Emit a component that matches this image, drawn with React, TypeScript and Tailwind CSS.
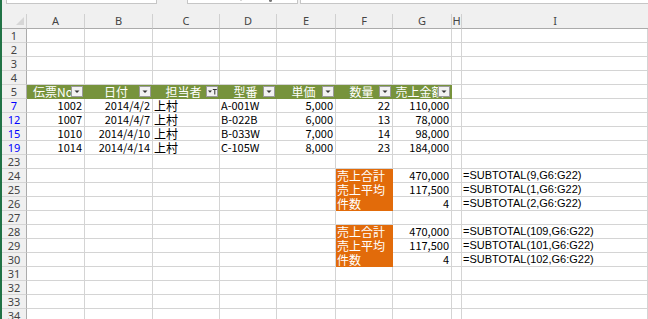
import React from "react";

type Cell = {
  t: string;
  a?: "l" | "r" | "c";
  f?: "num" | "jp" | "fx" | "head";
  bg?: "green" | "orange";
  btn?: "sort" | "filter";
} | null;

type Row = { n: number; blue?: boolean; cells: Cell[] };

const widths = ["w-[58px]", "w-[68px]", "w-[67px]", "w-[57px]", "w-[59px]", "w-[57px]", "w-[59px]", "w-[10px]", "flex-1"];
const letters = ["A", "B", "C", "D", "E", "F", "G", "H", "I"];

const empty = (n: number): Row => ({ n, cells: Array(9).fill(null) });

const head: Cell[] = [
  ...["伝票No", "日付", "担当者", "型番", "単価", "数量", "売上金額"].map(
    (t, i): Cell => ({ t, a: "c", f: "head", bg: "green", btn: i === 2 ? "filter" : "sort" }),
  ),
  null,
  null,
];

const data = (n: number, v: string[]): Row => ({
  n,
  blue: true,
  cells: [
    { t: v[0], a: "r", f: "num" },
    { t: v[1], a: "r", f: "num" },
    { t: v[2], a: "l", f: "jp" },
    { t: v[3], a: "l", f: "num" },
    { t: v[4], a: "r", f: "num" },
    { t: v[5], a: "r", f: "num" },
    { t: v[6], a: "r", f: "num" },
    null,
    null,
  ],
});

const sum = (n: number, label: string, value: string, formula: string): Row => ({
  n,
  cells: [
    null, null, null, null, null,
    { t: label, a: "l", f: "jp", bg: "orange" },
    { t: value, a: "r", f: "num" },
    null,
    { t: formula, a: "l", f: "fx" },
  ],
});

const rows: Row[] = [
  empty(1),
  empty(2),
  empty(3),
  empty(4),
  { n: 5, cells: head },
  data(7, ["1002", "2014/4/2", "上村", "A-001W", "5,000", "22", "110,000"]),
  data(12, ["1007", "2014/4/7", "上村", "B-022B", "6,000", "13", "78,000"]),
  data(15, ["1010", "2014/4/10", "上村", "B-033W", "7,000", "14", "98,000"]),
  data(19, ["1014", "2014/4/14", "上村", "C-105W", "8,000", "23", "184,000"]),
  empty(23),
  sum(24, "売上合計", "470,000", "=SUBTOTAL(9,G6:G22)"),
  sum(25, "売上平均", "117,500", "=SUBTOTAL(1,G6:G22)"),
  sum(26, "件数", "4", "=SUBTOTAL(2,G6:G22)"),
  empty(27),
  sum(28, "売上合計", "470,000", "=SUBTOTAL(109,G6:G22)"),
  sum(29, "売上平均", "117,500", "=SUBTOTAL(101,G6:G22)"),
  sum(30, "件数", "4", "=SUBTOTAL(102,G6:G22)"),
  empty(31),
  empty(32),
  empty(33),
  empty(34),
];

function FilterButton({ kind }: { kind: "sort" | "filter" }) {
  return (
    <svg className="absolute right-[1px] top-[1px]" width="12" height="11" viewBox="0 0 12 11">
      <rect x="0.5" y="0.5" width="11" height="10" fill="#f2f2f2" stroke="#9a9a9a" />
      {kind === "sort" ? (
        <path d="M3.5 4.5h5L6 7z" fill="#333" />
      ) : (
        <>
          <path d="M2 4.5h4L4 6.8z" fill="#333" />
          <path d="M6.8 3h4v1h-1.5v4.5h-1V4H6.8z" fill="#333" />
        </>
      )}
    </svg>
  );
}

function GridCell({ w, cell }: { w: string; cell: Cell }) {
  const fill =
    cell?.bg === "green"
      ? "bg-[#77933c] border-[#77933c] text-white"
      : cell?.bg === "orange"
        ? "bg-[#e26b0a] border-[#e26b0a] text-white"
        : "border-[#d4d4d4] text-black";
  const align =
    cell?.a === "r" ? "justify-end pr-[2px]" : cell?.a === "c" ? "justify-center pr-[5px]" : "justify-start pl-[1px]";
  const font =
    cell?.f === "num"
      ? "font-['Noto_Sans_CJK_JP',sans-serif] text-[11px]"
      : cell?.f === "fx"
        ? "font-['Liberation_Sans',sans-serif] text-[11px]"
        : "font-['Noto_Sans_CJK_JP',sans-serif] text-[12px]";
  return (
    <div className={`${w} relative flex shrink-0 items-center overflow-hidden whitespace-nowrap border-b border-r leading-[13px] ${fill} ${align} ${font}`}>
      {cell?.t}
      {cell?.btn && <FilterButton kind={cell.btn} />}
    </div>
  );
}

export default function App() {
  return (
    <div className="flex h-[319px] w-[648px] flex-col overflow-hidden border-l-2 border-[#217346] bg-white">
      <div className="flex h-[14px] shrink-0 items-start bg-[#f0f0f0]">
        <div className="ml-[4px] h-[4px] w-[151px] border-x border-b border-[#c6c6c6] bg-white" />
        <div className="relative ml-[30px] h-[4px] w-[111px] border-x border-b border-[#c6c6c6] bg-white">
          <span className="absolute left-[52px] top-0 h-[1px] w-[2px] bg-[#d8d8d8]" />
          <span className="absolute left-[81px] top-0 h-[2px] w-[3px] rounded-b-full bg-[#777]" />
        </div>
        <div className="ml-[2px] h-[4px] flex-1 border-b border-l border-[#c6c6c6] bg-white" />
      </div>

      <div className="flex h-[15px] shrink-0 bg-[#f0f0f0] font-['Noto_Sans',sans-serif] text-[11px] leading-[14px] text-[#444]">
        <div className="flex w-[25px] shrink-0 items-end justify-end border-b border-r border-b-[#ababab] border-r-[#d0d0d0] pb-[3px] pr-[2px]">
          <svg width="8" height="8" viewBox="0 0 8 8">
            <path d="M8 0v8H0z" fill="#d6d6d6" />
          </svg>
        </div>
        {letters.map((l, i) => (
          <div
            key={l}
            className={`${widths[i]} flex shrink-0 items-center justify-center border-b border-b-[#ababab] ${i < 8 ? "border-r border-r-[#d0d0d0]" : ""}`}
          >
            {l}
          </div>
        ))}
      </div>

      {rows.map((row) => (
        <div key={row.n} className="flex h-[14px] shrink-0">
          <div
            className={`flex w-[25px] shrink-0 items-center justify-center border-b border-r border-b-[#d5d5d5] border-r-[#ababab] bg-[#f0f0f0] font-['Noto_Sans',sans-serif] text-[11px] leading-[13px] ${row.blue ? "text-[#0000ff]" : "text-[#444]"}`}
          >
            {row.n}
          </div>
          {row.cells.map((cell, i) => (
            <GridCell key={i} w={widths[i]} cell={cell} />
          ))}
        </div>
      ))}
    </div>
  );
}
